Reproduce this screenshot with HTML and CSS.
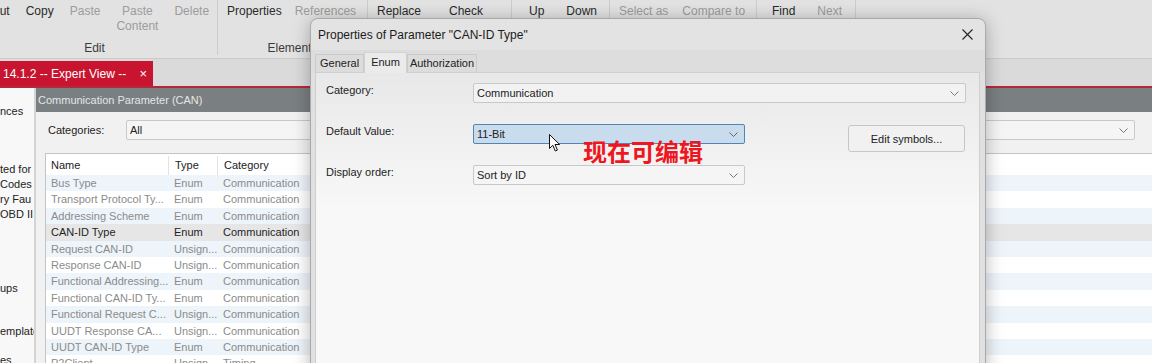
FILE: index.html
```html
<!DOCTYPE html>
<html lang="en">
<head>
  <meta charset="UTF-8" />
  <title>Communication Parameter (CAN)</title>
  <link rel="stylesheet" href="styles.css">
</head>
<body>
  <div class="ribbon">
    <div class="rgroup g-edit">
      <div class="rbuttons">
        <span class="rbtn">Cut</span>
        <span class="rbtn">Copy</span>
        <span class="rbtn off">Paste</span>
        <span class="rbtn off stack">Paste<br>Content</span>
        <span class="rbtn off">Delete</span>
      </div>
      <div class="rlabel">Edit</div>
    </div>
    <div class="rgroup g-elem">
      <div class="rbuttons">
        <span class="rbtn">Properties</span>
        <span class="rbtn off">References</span>
      </div>
      <div class="rlabel">Elements</div>
    </div>
    <div class="rgroup g-repl">
      <div class="rbuttons">
        <span class="rbtn">Replace</span>
        <span class="rbtn">Check</span>
      </div>
      <div class="rlabel">Replace</div>
    </div>
    <div class="rgroup g-move">
      <div class="rbuttons">
        <span class="rbtn">Up</span>
        <span class="rbtn">Down</span>
      </div>
      <div class="rlabel">Order</div>
    </div>
    <div class="rgroup g-cmp">
      <div class="rbuttons">
        <span class="rbtn off">Select as</span>
        <span class="rbtn off">Compare to</span>
      </div>
      <div class="rlabel">Compare</div>
    </div>
    <div class="rgroup g-find">
      <div class="rbuttons">
        <span class="rbtn">Find</span>
        <span class="rbtn off">Next</span>
      </div>
      <div class="rlabel">Find</div>
    </div>
  </div>

  <div class="tabbar">
    <div class="doc-tab">14.1.2 -- Expert View -- <span class="doc-close">×</span></div>
  </div>

  <div class="workspace">
    <div class="tree">
      <div class="tree-item">nces</div>
      <div class="tree-item gap-a">ted for</div>
      <div class="tree-item">Codes</div>
      <div class="tree-item">ry Fau</div>
      <div class="tree-item">OBD II</div>
      <div class="tree-item gap-b">ups</div>
      <div class="tree-item gap-c">emplate</div>
      <div class="tree-item gap-d">es</div>
    </div>

    <div class="main">
      <div class="main-head">Communication Parameter (CAN)</div>
      <div class="cat-row">
        <span class="cat-label">Categories:</span>
        <div class="combo cat-combo">
          <span>All</span>
          <svg class="chev" width="9" height="5" viewBox="0 0 9 5"><path d="M0.5 0.5 L4.5 4.5 L8.5 0.5" fill="none" stroke="#777" stroke-width="1"/></svg>
        </div>
      </div>

      <div class="list">
        <div class="list-row list-head">
          <span class="c-name">Name</span>
          <span class="c-type">Type</span>
          <span class="c-cat">Category</span>
        </div>
        <div class="list-row alt"><span class="c-name">Bus Type</span><span class="c-type">Enum</span><span class="c-cat">Communication</span></div>
        <div class="list-row"><span class="c-name">Transport Protocol Ty...</span><span class="c-type">Enum</span><span class="c-cat">Communication</span></div>
        <div class="list-row alt"><span class="c-name">Addressing Scheme</span><span class="c-type">Enum</span><span class="c-cat">Communication</span></div>
        <div class="list-row sel"><span class="c-name">CAN-ID Type</span><span class="c-type">Enum</span><span class="c-cat">Communication</span></div>
        <div class="list-row alt"><span class="c-name">Request CAN-ID</span><span class="c-type">Unsign...</span><span class="c-cat">Communication</span></div>
        <div class="list-row"><span class="c-name">Response CAN-ID</span><span class="c-type">Unsign...</span><span class="c-cat">Communication</span></div>
        <div class="list-row alt"><span class="c-name">Functional Addressing...</span><span class="c-type">Enum</span><span class="c-cat">Communication</span></div>
        <div class="list-row"><span class="c-name">Functional CAN-ID Ty...</span><span class="c-type">Enum</span><span class="c-cat">Communication</span></div>
        <div class="list-row alt"><span class="c-name">Functional Request C...</span><span class="c-type">Unsign...</span><span class="c-cat">Communication</span></div>
        <div class="list-row"><span class="c-name">UUDT Response CA...</span><span class="c-type">Unsign...</span><span class="c-cat">Communication</span></div>
        <div class="list-row alt"><span class="c-name">UUDT CAN-ID Type</span><span class="c-type">Enum</span><span class="c-cat">Communication</span></div>
        <div class="list-row"><span class="c-name">P2Client</span><span class="c-type">Unsign...</span><span class="c-cat">Timing</span></div>
      </div>
    </div>
  </div>

  <!-- modal dialog over the workspace -->
  <div class="dialog">
    <div class="dlg-title">
      <span>Properties of Parameter "CAN-ID Type"</span>
      <svg class="dlg-close" width="11" height="11" viewBox="0 0 11 11"><path d="M0.5 0.5 L10.5 10.5 M10.5 0.5 L0.5 10.5" stroke="#222" stroke-width="1.1"/></svg>
    </div>
    <div class="dlg-tabs">
      <span class="dtab">General</span>
      <span class="dtab active">Enum</span>
      <span class="dtab auth">Authorization</span>
    </div>
    <div class="dlg-body">
      <div class="field">
        <span class="field-label">Category:</span>
        <div class="combo wide">
          <span>Communication</span>
          <svg class="chev" width="9" height="5" viewBox="0 0 9 5"><path d="M0.5 0.5 L4.5 4.5 L8.5 0.5" fill="none" stroke="#777" stroke-width="1"/></svg>
        </div>
      </div>
      <div class="field">
        <span class="field-label">Default Value:</span>
        <div class="combo narrow focus">
          <span>11-Bit</span>
          <svg class="chev" width="9" height="5" viewBox="0 0 9 5"><path d="M0.5 0.5 L4.5 4.5 L8.5 0.5" fill="none" stroke="#666" stroke-width="1"/></svg>
        </div>
        <button class="edit-btn">Edit symbols...</button>
      </div>
      <div class="field">
        <span class="field-label">Display order:</span>
        <div class="combo narrow">
          <span>Sort by ID</span>
          <svg class="chev" width="9" height="5" viewBox="0 0 9 5"><path d="M0.5 0.5 L4.5 4.5 L8.5 0.5" fill="none" stroke="#777" stroke-width="1"/></svg>
        </div>
      </div>
    </div>
  </div>

  <svg class="cursor" width="12" height="18" viewBox="0 0 12 18"><path d="M0.5 0.5 L0.5 14.5 L3.8 11.3 L6.3 17 L8.4 16.1 L6 10.5 L10.6 10.5 Z" fill="#fff" stroke="#111" stroke-width="1"/></svg>
  <div class="note">现在可编辑</div>
</body>
</html>
```

FILE: styles.css
```css
body {
  margin: 0;
  width: 1152px;
  height: 363px;
  overflow: hidden;
  position: relative;
  font-family: "Liberation Sans", Arial, sans-serif;
  font-size: 12px;
  color: #222;
  background: #dedede;
}

/* ribbon */
.ribbon {
  display: flex;
  height: 58px;
  background: #e2e2e2;
  border-bottom: 1px solid #cbcbcb;
  overflow: hidden;
}

.rgroup {
  flex: none;
  box-sizing: border-box;
  height: 55px;
  display: flex;
  flex-direction: column;
  border-right: 1px solid #cdcdcd;
}

.rbuttons {
  display: flex;
  align-items: flex-start;
  padding-top: 4px;
  line-height: 15px;
}

.rbtn {
  color: #2a2a2a;
  white-space: nowrap;
}
.rbtn.off {
  color: #9c9c9c;
}
.rbtn.stack {
  text-align: center;
}

.rlabel {
  margin-top: auto;
  text-align: center;
  line-height: 14px;
  color: #3a3a3a;
}

.g-edit { margin-left: -28px; width: 246px; }
.g-edit .rbuttons { padding-left: 19px; gap: 16px; }
.g-elem { width: 150px; }
.g-elem .rbuttons { padding-left: 9px; gap: 13px; }
.g-repl { width: 144px; }
.g-repl .rbuttons { padding-left: 9px; gap: 28px; }
.g-move { width: 98px; }
.g-move .rbuttons { padding-left: 17px; gap: 22px; }
.g-cmp { width: 147px; }
.g-cmp .rbuttons { padding-left: 9px; gap: 14px; }
.g-find { width: 99px; }
.g-find .rbuttons { padding-left: 15px; gap: 22px; }

/* document tabs */
.tabbar {
  height: 27px;
  border-bottom: 2px solid #b3293c;
  background: #dadada;
  display: flex;
  align-items: flex-end;
}

.doc-tab {
  height: 25px;
  width: 153px;
  box-sizing: border-box;
  padding-left: 3px;
  background: #c8142f;
  color: #fff;
  line-height: 25px;
  font-size: 12px;
  white-space: nowrap;
}
.doc-close {
  margin-left: 10px;
  font-size: 13px;
}

/* workspace */
.workspace {
  display: flex;
  height: 275px;
}

.tree {
  width: 36px;
  flex: none;
  background: #f8f8f8;
  border-right: 2px solid #d4d4d4;
  overflow: hidden;
  white-space: nowrap;
  font-size: 11px;
  padding-top: 16px;
  box-sizing: border-box;
}
.tree-item {
  line-height: 15px;
}
.tree-item.gap-a { margin-top: 43px; }
.tree-item.gap-b { margin-top: 59px; }
.tree-item.gap-c { margin-top: 28px; }
.tree-item.gap-d { margin-top: 14px; }

.main {
  flex: 1;
  background: #f1f1f1;
  display: flex;
  flex-direction: column;
  overflow: hidden;
}

.main-head {
  height: 24px;
  line-height: 24px;
  padding-left: 2px;
  background: #7a7f81;
  color: #e4e6e6;
  font-size: 11px;
}

.cat-row {
  display: flex;
  align-items: center;
  padding: 8px 17px 0 12px;
  font-size: 11px;
}
.cat-label {
  width: 78px;
}

.combo {
  box-sizing: border-box;
  height: 20px;
  display: flex;
  align-items: center;
  justify-content: space-between;
  padding: 0 6px 0 3px;
  background: #f5f5f5;
  border: 1px solid #c9c9c9;
  border-radius: 2px;
  font-size: 11px;
}
.cat-combo {
  flex: 1;
}
.chev {
  flex: none;
}

.list {
  margin: 13px 0 0 9px;
  border-top: 1px solid #c4c4c4;
  border-left: 1px solid #c4c4c4;
  background: #fff;
  font-size: 11px;
}

.list-row {
  display: flex;
  height: 16.4px;
  line-height: 16.4px;
  color: #8b8b8b;
  white-space: nowrap;
}
.list-row.alt { background: #edf4fa; }
.list-row.sel { background: #e6e6e6; color: #1e1e1e; }

.list-head {
  height: 19px;
  line-height: 19px;
  padding-top: 2px;
  color: #222;
}
.list-head span {
  border-right: 1px solid #e2e2e2;
}

.c-name { width: 122px; padding-left: 5px; box-sizing: border-box; flex: none; }
.c-type { width: 49px; padding-left: 6px; box-sizing: border-box; flex: none; }
.c-cat { width: 120px; padding-left: 6px; box-sizing: border-box; flex: none; }
.list-head .c-name { width: 123px; }

/* dialog */
.dialog {
  position: absolute;
  left: 310px;
  top: 18px;
  width: 676px;
  height: 362px;
  box-sizing: border-box;
  background: #e0e0e0;
  border: 1px solid #a9a9a9;
  border-radius: 8px 8px 0 0;
  box-shadow: 0 2px 18px rgba(0, 0, 0, 0.28);
  display: flex;
  flex-direction: column;
}

.dlg-title {
  height: 31px;
  display: flex;
  align-items: center;
  justify-content: space-between;
  padding: 0 12px 0 7px;
  font-size: 12px;
  color: #1b1b1b;
  background: #e3e3e3;
  border-radius: 8px 8px 0 0;
}

.dlg-tabs {
  height: 22px;
  display: flex;
  align-items: flex-end;
  padding-left: 4px;
  background: #dddddd;
}
.dtab {
  height: 17px;
  line-height: 17px;
  padding: 0 4px;
  font-size: 11px;
  background: #dcdcdc;
  border: 1px solid #cbcbcb;
  border-bottom: none;
  color: #222;
}
.dtab.active {
  height: 20px;
  line-height: 18px;
  padding: 0 6px;
  background: #ebebeb;
  border-color: #d2d2d2;
  position: relative;
  top: 1px;
}
.dtab.auth {
  padding: 0 2px;
}

.dlg-body {
  flex: 1;
  margin: 0 5px 0 4px;
  border: 1px solid #cfcfcf;
  background: linear-gradient(#e8e8e8, #f8f8f8 45%, #f8f8f8);
  padding: 10px 0 0 10px;
  font-size: 11px;
}

.field {
  display: flex;
  align-items: flex-start;
  height: 41px;
}
.field-label {
  width: 147px;
  line-height: 14px;
  flex: none;
}
.combo.wide { width: 493px; background: #f2f2f2; }
.combo.narrow { width: 272px; }
.combo.focus {
  background: #c9dcee;
  border-color: #5484b0;
}

.edit-btn {
  margin: 1px 0 0 103px;
  width: 117px;
  height: 27px;
  font-family: "Liberation Sans", Arial, sans-serif;
  font-size: 11px;
  color: #222;
  background: #f1f1f1;
  border: 1px solid #c6c6c6;
  border-radius: 3px;
}

/* overlays */
.cursor {
  position: absolute;
  left: 549px;
  top: 134px;
}

.note {
  position: absolute;
  left: 583px;
  top: 136px;
  font-family: "Noto Sans CJK SC", sans-serif;
  font-weight: bold;
  font-size: 24px;
  line-height: 30px;
  color: #ee1620;
}
```
